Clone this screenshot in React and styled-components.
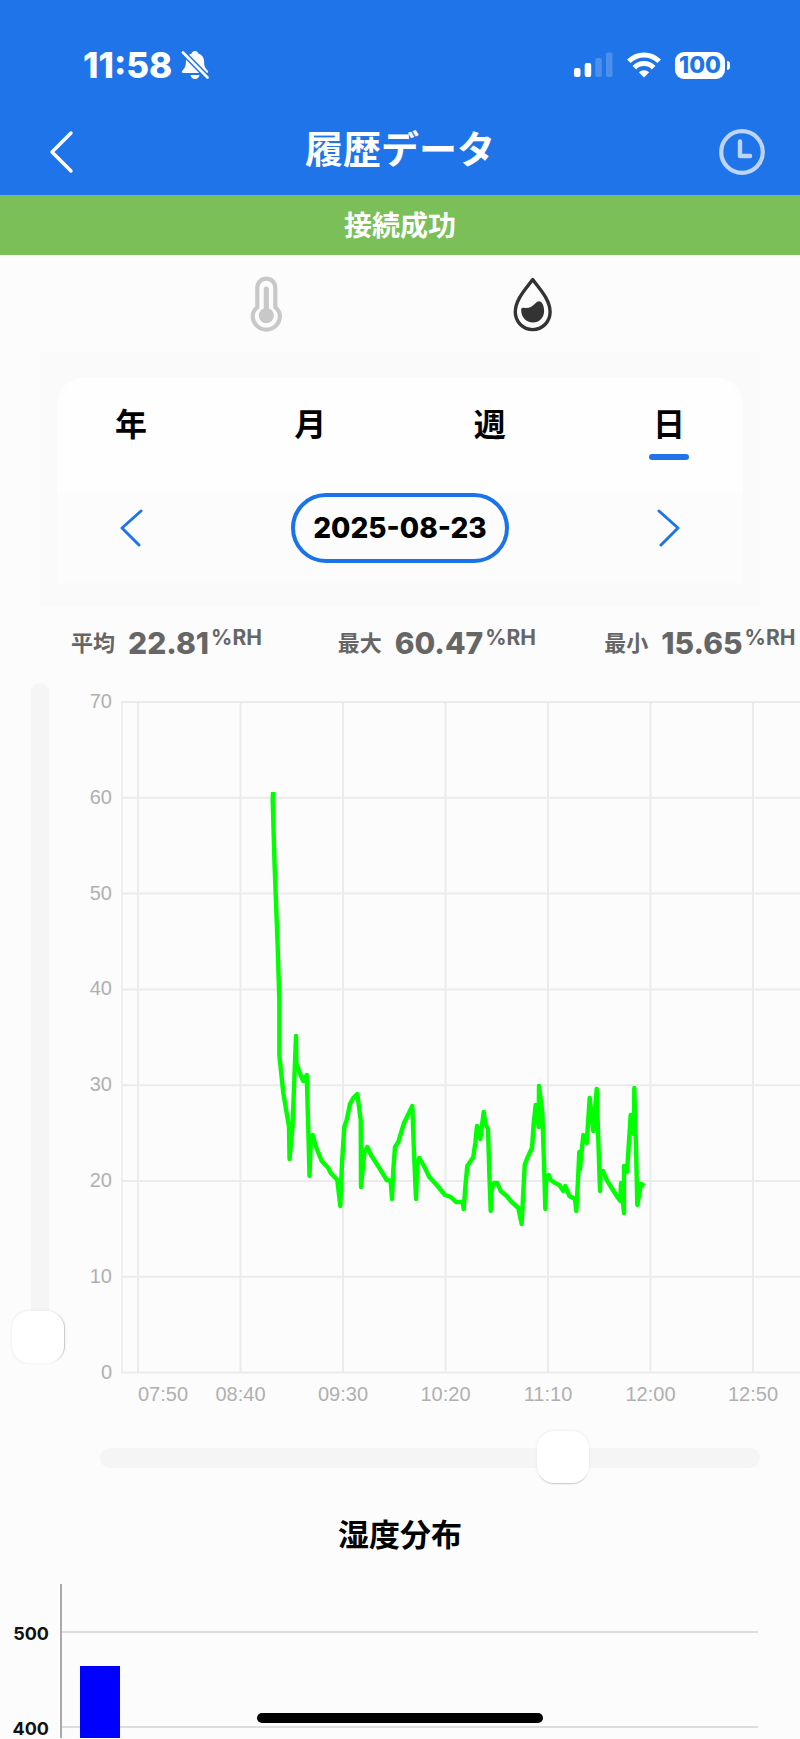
import { useState } from "react";
import styled, { createGlobalStyle } from "styled-components";

const GlobalStyle = createGlobalStyle`
  * {
    box-sizing: border-box;
  }

  body {
    margin: 0;
    background-color: #fcfcfc;
    font-family: Inter, "Noto Sans CJK JP", sans-serif;
  }

  button {
    padding: 0;
    border: none;
    background: none;
    font-family: inherit;
    cursor: pointer;
  }
`;

const Page = styled.main`
  width: 100%;
  overflow: hidden;
`;

const Header = styled.header`
  background-color: #2074e9;
  color: white;
`;

const StatusBar = styled.div`
  display: flex;
  align-items: center;
  justify-content: space-between;
  padding: 44px 70px 22px 83px;
`;

const StatusGroup = styled.div`
  display: flex;
  align-items: center;
  height: 42px;
  gap: ${(props) => props.gap}px;
`;

const Time = styled.span`
  font-size: 35px;
  font-weight: 800;
`;

const Battery = styled.div`
  display: flex;
  align-items: center;
  gap: 2px;
`;

const BatteryBody = styled.span`
  width: 50px;
  height: 27px;
  border-radius: 9px;
  background-color: white;
  color: #2074e9;
  font-size: 23px;
  line-height: 27px;
  font-weight: 800;
  text-align: center;
`;

const BatteryTip = styled.span`
  width: 3px;
  height: 9px;
  border-radius: 0 4px 4px 0;
  background-color: white;
`;

const NavBar = styled.div`
  display: flex;
  align-items: center;
  justify-content: space-between;
  height: 87px;
  padding: 0 32px;
`;

const NavButton = styled.button`
  width: 52px;
  height: 52px;
`;

const Title = styled.h1`
  margin: 0;
  padding-bottom: 6px;
  font-size: 38px;
  line-height: 56px;
  font-weight: 700;
`;

const Banner = styled.div`
  height: 60px;
  padding-top: 1px;
  background-color: #7bbf58;
  color: white;
  font-size: 28px;
  line-height: 60px;
  font-weight: 700;
  text-align: center;
`;

const Sensors = styled.div`
  display: grid;
  grid-template-columns: 1fr 1fr;
  place-items: center;
  height: 97px;
  padding: 0 calc(100% / 6);
`;

const SensorButton = styled.button`
  width: 60px;
  height: 60px;
`;

const Panel = styled.section`
  margin: 0 40px;
  padding: 26px 17px 23px;
  background-color: #fafafa;
`;

const Card = styled.div`
  border-radius: 26px 26px 0 0;
  background-color: #fefefe;
`;

const Tabs = styled.div`
  display: flex;
  justify-content: space-between;
  padding: 23px 24px 33px;
`;

const Tab = styled.button`
  display: flex;
  flex-direction: column;
  align-items: center;
  gap: 5px;
  width: 100px;
  color: black;
  font-size: 32px;
  line-height: 48px;
  font-weight: 700;

  &::after {
    content: "";
    width: 40px;
    height: 6px;
    border-radius: 3px;
    background-color: ${(props) => (props.$active ? "#2074e9" : "transparent")};
  }
`;

const DateRow = styled.div`
  display: flex;
  justify-content: space-between;
  padding: 0 24px 20px;
  background-color: #fcfcfc;
`;

const ArrowButton = styled.button`
  width: 100px;
  height: 70px;
`;

const DateButton = styled.button`
  width: 218px;
  height: 70px;
  border: 4px solid #1b73ea;
  border-radius: 35px;
  color: black;
  font-size: 28px;
  font-weight: 800;
`;

const Stats = styled.dl`
  display: flex;
  margin: 0;
  padding: 19px 0 22px;
  color: #666;
`;

const Stat = styled.div`
  display: flex;
  flex: 0 0 calc(100% / 3);
  gap: 13px;
  min-width: 0;
  padding-left: 71px;
  line-height: 36px;
  font-weight: 700;
  white-space: nowrap;
`;

const StatLabel = styled.dt`
  flex: none;
  font-size: 22px;
`;

const StatValue = styled.dd`
  display: flex;
  align-items: flex-start;
  gap: 2px;
  margin: 0;
  font-size: 30px;
  font-weight: 800;
`;

const Unit = styled.span`
  font-size: 21px;
  line-height: 26px;
  font-weight: 700;
`;

const ChartRow = styled.section`
  display: flex;
  align-items: flex-start;
`;

const Chart = styled.svg`
  display: block;
  flex: 1;
  width: 100%;
  min-width: 0;
`;

const Range = styled.input`
  appearance: none;
  display: block;
  margin: 0;
  border-radius: 10px;
  background-color: #f5f5f5;

  &::-webkit-slider-thumb {
    appearance: none;
    width: 52px;
    height: 52px;
    border-radius: 17px;
    background-color: white;
  }
`;

const VerticalRange = styled(Range)`
  writing-mode: vertical-lr;
  direction: rtl;
  width: 18px;
  height: 680px;
  margin: 0 27px 0 31px;

  &::-webkit-slider-thumb {
    margin-left: -4px;
    box-shadow: 0 0 3px #e4e4e4, 2px 0 1px -1px #bbb;
  }
`;

const HorizontalRange = styled(Range)`
  width: calc(100% - 140px);
  height: 20px;
  margin: 40px 40px 0 100px;

  &::-webkit-slider-thumb {
    margin-top: -2px;
    box-shadow: 0 0 3px #e4e4e4, 0 2px 1px -1px #bbb;
  }
`;

const SectionTitle = styled.h2`
  margin: 43px 0 21px;
  font-size: 31px;
  line-height: 48px;
  font-weight: 700;
  text-align: center;
`;

const AxisText = styled.text`
  fill: #b0b0b0;
  font-family: "Liberation Sans", Arial, sans-serif;
  font-size: 20px;
`;

const BarText = styled.text`
  fill: #111;
  font-size: 18px;
  font-weight: 700;
  text-anchor: end;
`;

const HomeIndicator = styled.div`
  position: fixed;
  bottom: 16px;
  left: 50%;
  width: 286px;
  height: 10px;
  margin-left: -143px;
  border-radius: 5px;
  background-color: black;
`;

const periods = ["年", "月", "週", "日"];

const stats = [
  { label: "平均", value: "22.81" },
  { label: "最大", value: "60.47" },
  { label: "最小", value: "15.65" },
];

const times = ["07:50", "08:40", "09:30", "10:20", "11:10", "12:00", "12:50"];
const levels = [70, 60, 50, 40, 30, 20, 10, 0];

const humidityLine = `
  273,792 272.7,800 274.5,863 277.7,947 279.3,1000 279.3,1055 283.3,1093 289,1127
  289.5,1159 292.5,1127 294.3,1080 296,1036 296.3,1063 299.3,1072 303.3,1081
  306.7,1075 308.3,1130 309.5,1176 311,1137 312.7,1135 316,1147 321.7,1161
  328.3,1168 330.7,1173 337.3,1180 340.3,1206 342,1163 344.3,1127 346.7,1120
  350,1104 353.3,1098 357.3,1094 360.7,1120 361,1187 364.3,1153 367.3,1147
  371,1155 380,1169 386.7,1180 390.7,1181 392,1199 393.3,1170 395,1147 398.3,1142
  404,1123 412.3,1106 414,1153 416,1199 417.3,1163 419.3,1158 424,1166 429.3,1177
  436.7,1185 440,1189 445,1195 450.7,1197 456,1202 462.7,1202 463.7,1209
  465.3,1187 467.3,1166 470.7,1161 473.3,1157 475.3,1143 477,1126 480.3,1139
  483.7,1112 485.7,1125 488,1129 489.3,1173 490.7,1211 491.7,1190 494,1183
  497.3,1183 500.7,1191 506.7,1196 511.7,1202 518.3,1208 521.7,1224 523,1197
  524.7,1165 527.3,1158 532,1148 533.7,1123 535.7,1105 538.7,1127 539,1086
  542.3,1112 544,1163 545.3,1209 546.3,1177 548.7,1175 550.7,1180 555,1183
  559.3,1185 563.3,1191 565.3,1186 569.3,1196 575,1199 576.3,1211 578,1180
  579.3,1152 580,1169 583.3,1135 586.7,1143 589.7,1098 593.3,1131 596.7,1089
  598.3,1140 600,1191 600.7,1172 603,1171 606.7,1180 611.7,1188 616.7,1196
  620.3,1201 621,1183 624,1213 624,1166 627,1172 630.7,1115 634,1134 634.3,1088
  636,1147 637.3,1205 641,1184 644.3,1186
`;

const SilentIcon = () => (
  <svg width="28" height="30" viewBox="0 0 28 30" fill="none">
    <path
      d="M14 1c-1.8 0-3 1.2-3.3 2.4C7 4.600 4.900 7.600 4.900 11.500c0 4.500-.9 6.200-3.700 9.300-.8 1-.3 2.200 1 2.200h23.600c1.300 0 1.800-1.200 1-2.200-2.800-3.100-3.700-4.800-3.700-9.300 0-3.900-2.100-6.900-5.800-8.100C17 2.200 15.800 1 14 1z"
      fill="white"
    />
    <path d="M9.500 25h9c-.5 2.500-2.200 4-4.500 4s-4-1.500-4.500-4z" fill="white" />
    <path d="M2 2.500l24.500 25" stroke="#2074e9" strokeWidth="5.600" />
    <path d="M2 2.500l24.500 25" stroke="white" strokeWidth="2.600" strokeLinecap="round" />
  </svg>
);

const SignalIcon = () => (
  <svg width="39" height="26" viewBox="0 0 39 26" fill="white">
    <rect x="0" y="16" width="6.500" height="9" rx="2" />
    <rect x="10.700" y="11" width="6.500" height="14" rx="2" />
    <rect x="21.300" y="6" width="6.500" height="19" rx="2" opacity="0.2" />
    <rect x="32" y="0.500" width="6.500" height="24.500" rx="2" opacity="0.2" />
  </svg>
);

const WifiIcon = () => (
  <svg width="34" height="26" viewBox="0 0 34 26" fill="none" stroke="white" strokeWidth="5">
    <path d="M1.800 9.300a21.500 21.500 0 0 1 30.400 0" />
    <path d="M7.400 15.700a13.300 13.300 0 0 1 19.200 0" />
    <path d="M17 25.500l-5.200-5.200a7.400 7.400 0 0 1 10.400 0z" fill="white" stroke="none" />
  </svg>
);

const ClockIcon = () => (
  <svg width="52" height="52" viewBox="0 0 52 52" fill="none" stroke="#bdd6f8">
    <circle cx="26" cy="26" r="20.800" strokeWidth="4.200" />
    <path d="M24 15.500V30h10" strokeWidth="4.400" strokeLinecap="round" strokeLinejoin="round" />
  </svg>
);

const ThermometerIcon = () => (
  <svg width="60" height="60" viewBox="0 0 60 60" fill="none" stroke="#c8c8c8">
    <path
      d="M20.300 33.300V13.700a9 9 0 0 1 18 0v19.600c3 2.300 4.600 5.300 4.600 8.700a13.600 13.600 0 0 1-27.200 0c0-3.400 1.600-6.400 4.600-8.700z"
      strokeWidth="4.200"
    />
    <path d="M29.300 15v24" strokeWidth="5.200" strokeLinecap="round" />
    <circle cx="29.300" cy="41.600" r="7.600" fill="#c8c8c8" stroke="none" />
  </svg>
);

const DropIcon = () => (
  <svg width="60" height="60" viewBox="0 0 60 60" fill="none">
    <path
      d="M29.700 5.500C22.700 15 12.300 25.500 12.300 38a17.400 17.600 0 0 0 34.800 0C47.100 25.500 36.700 15 29.700 5.500z"
      stroke="#333"
      strokeWidth="3.400"
      strokeLinejoin="round"
    />
    <path
      d="M18.200 36c0-2 1-2.600 2.500-2.300 5 .9 8.500-.8 11.500-4.200 2.500-2.900 5.300-3.200 7-.2 1.300 2.400 2 5 1.900 8C41 44 36.200 48.500 30 48.500 23.200 48.500 18 43 18.200 36z"
      fill="#333"
    />
  </svg>
);

const Chevron = ({ width, height, points, color, stroke }) => (
  <svg width={width} height={height} viewBox={`0 0 ${width} ${height}`} fill="none">
    <polyline
      points={points}
      stroke={color}
      strokeWidth={stroke}
      strokeLinecap="round"
      strokeLinejoin="round"
    />
  </svg>
);

const HumidityChart = () => (
  <Chart viewBox="76 683 724 725" role="img" aria-label="湿度">
    <g stroke="#ebebeb" strokeWidth="2">
      {levels.map((level, i) => (
        <line key={level} x1="121" x2="800" y1={702 + i * 95.8} y2={702 + i * 95.8} />
      ))}
      <line x1="122" x2="122" y1="702" y2="1373" strokeWidth="1.500" />
      {times.map((time, i) => (
        <line key={time} x1={138 + i * 102.5} x2={138 + i * 102.5} y1="702" y2="1373" />
      ))}
    </g>
    {levels.map((level, i) => (
      <AxisText key={level} x="112" y={708 + i * 95.8} textAnchor="end">
        {level}
      </AxisText>
    ))}
    {times.map((time, i) => (
      <AxisText
        key={time}
        x={138 + i * 102.5}
        y="1401"
        textAnchor={i === 0 ? "start" : "middle"}
      >
        {time}
      </AxisText>
    ))}
    <polyline
      points={humidityLine}
      fill="none"
      stroke="#0f0"
      strokeWidth="4.400"
      strokeLinejoin="round"
    />
  </Chart>
);

const DistributionChart = () => (
  <Chart viewBox="0 1580 800 158" role="img" aria-label="湿度分布">
    <g stroke="#ddd" strokeWidth="2">
      <line x1="61" x2="758" y1="1632" y2="1632" />
      <line x1="61" x2="758" y1="1727" y2="1727" />
    </g>
    <line x1="61" x2="61" y1="1584" y2="1738" stroke="#aaa" strokeWidth="2" />
    <rect x="80" y="1666" width="40" height="72" fill="#00f" />
    <BarText x="49" y="1640">500</BarText>
    <BarText x="49" y="1735">400</BarText>
  </Chart>
);

const App = () => {
  const [period, setPeriod] = useState("日");

  return (
    <Page>
      <GlobalStyle />
      <Header>
        <StatusBar>
          <StatusGroup gap={9}>
            <Time>11:58</Time>
            <SilentIcon />
          </StatusGroup>
          <StatusGroup gap={14}>
            <SignalIcon />
            <WifiIcon />
            <Battery>
              <BatteryBody>100</BatteryBody>
              <BatteryTip />
            </Battery>
          </StatusGroup>
        </StatusBar>
        <NavBar>
          <NavButton aria-label="戻る">
            <Chevron width={52} height={52} points="39,7 20,26 39,45" color="white" stroke={3.4} />
          </NavButton>
          <Title>履歴データ</Title>
          <NavButton aria-label="時刻">
            <ClockIcon />
          </NavButton>
        </NavBar>
      </Header>
      <Banner>接続成功</Banner>
      <Sensors>
        <SensorButton aria-label="温度">
          <ThermometerIcon />
        </SensorButton>
        <SensorButton aria-label="湿度">
          <DropIcon />
        </SensorButton>
      </Sensors>
      <Panel>
        <Card>
          <Tabs>
            {periods.map((item) => (
              <Tab key={item} $active={item === period} onClick={() => setPeriod(item)}>
                {item}
              </Tab>
            ))}
          </Tabs>
          <DateRow>
            <ArrowButton aria-label="前の日">
              <Chevron width={24} height={40} points="22,4 3,21 20,38" color="#2074e9" stroke={3} />
            </ArrowButton>
            <DateButton>2025-08-23</DateButton>
            <ArrowButton aria-label="次の日">
              <Chevron width={24} height={40} points="2,4 21,21 4,38" color="#2074e9" stroke={3} />
            </ArrowButton>
          </DateRow>
        </Card>
      </Panel>
      <Stats>
        {stats.map((stat) => (
          <Stat key={stat.label}>
            <StatLabel>{stat.label}</StatLabel>
            <StatValue>
              {stat.value}
              <Unit>%RH</Unit>
            </StatValue>
          </Stat>
        ))}
      </Stats>
      <ChartRow>
        <VerticalRange type="range" aria-label="縦の拡大" defaultValue={0} />
        <HumidityChart />
      </ChartRow>
      <HorizontalRange type="range" aria-label="横の拡大" max={1000} defaultValue={718} />
      <SectionTitle>湿度分布</SectionTitle>
      <DistributionChart />
      <HomeIndicator />
    </Page>
  );
};

export default App;
